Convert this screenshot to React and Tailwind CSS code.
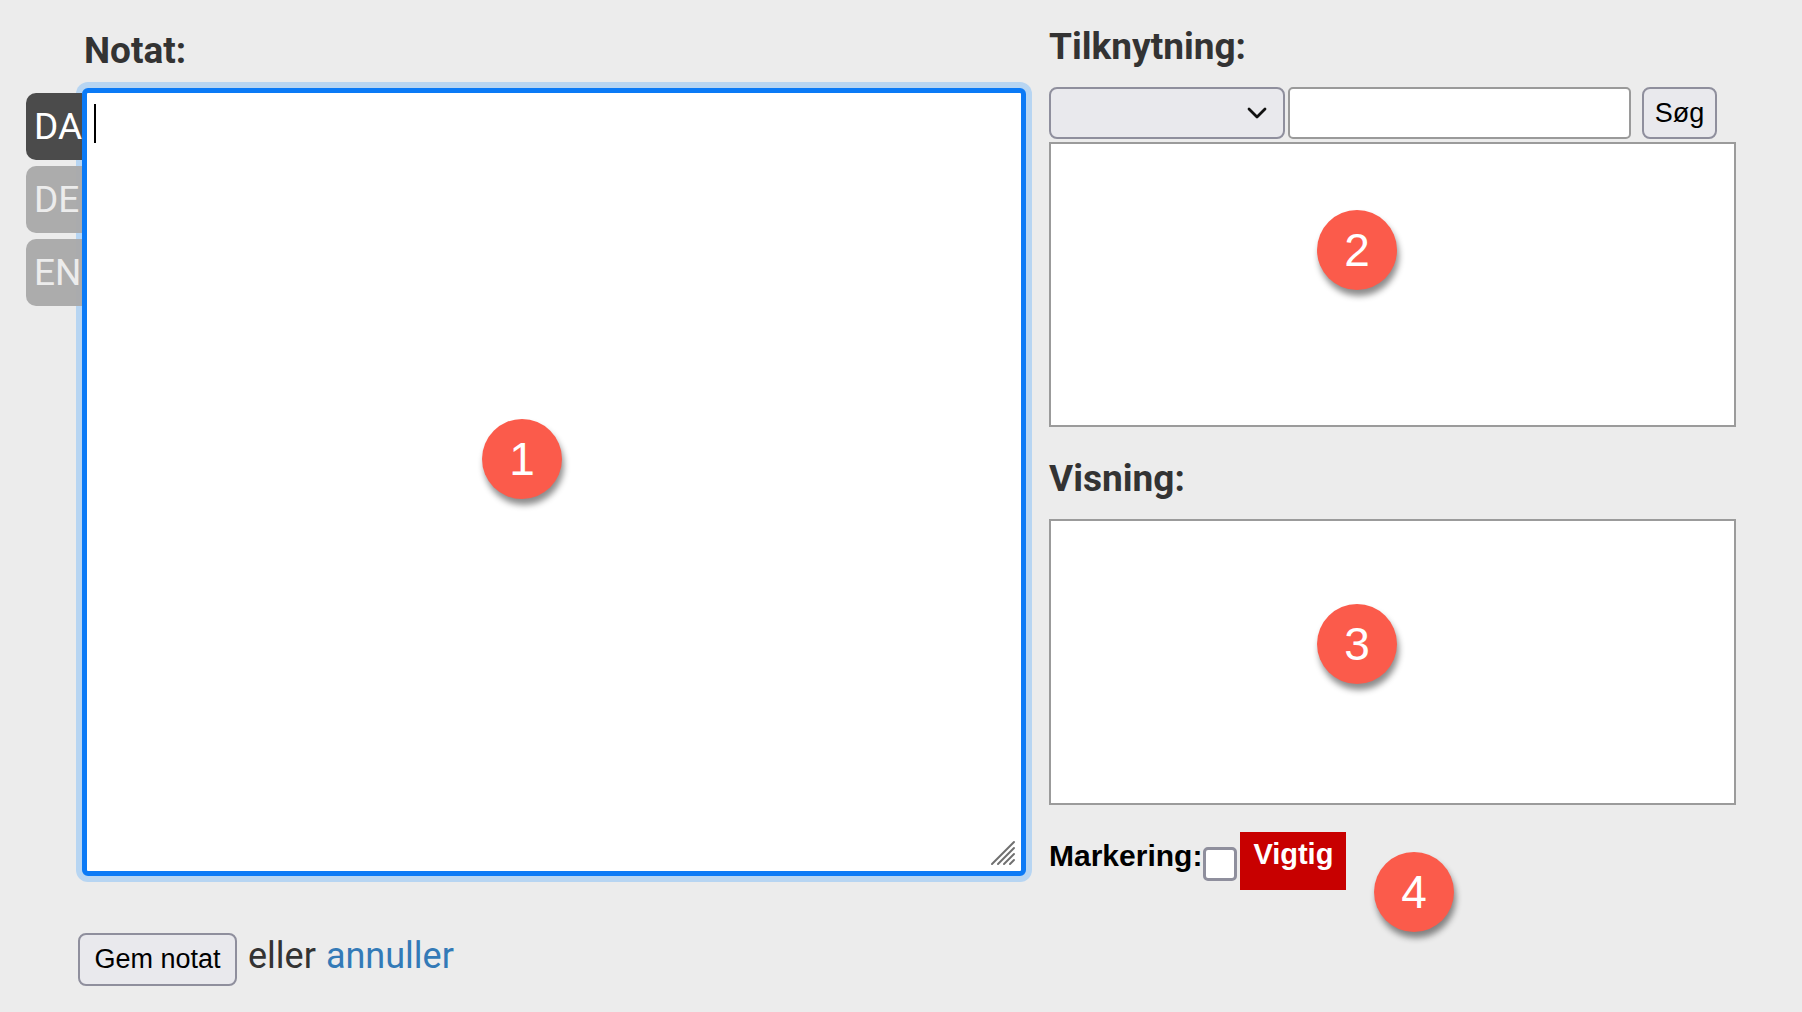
import React from "react";

const Badge = ({ n, className }) => (
  <div
    className={`absolute w-[80px] h-[80px] rounded-full bg-[#fb5b4b] shadow-[2px_6px_6px_rgba(0,0,0,0.45)] flex items-center justify-center text-white text-[46px] leading-none font-['Liberation_Sans',Arial,sans-serif] z-30 ${className}`}
  >
    {n}
  </div>
);

const Tab = ({ label, active }) => (
  <div
    className={`h-[67px] w-[56px] rounded-l-[10px] flex items-center pl-[8px] text-[37px] leading-none ${
      active ? "bg-[#4b4b4b] text-white" : "bg-[#a9a9a9]/95 text-[#ececec]"
    }`}
  >
    {label}
  </div>
);

export default function App() {
  return (
    <div className="relative w-[1802px] h-[1012px] overflow-hidden bg-[#ececec] font-['Roboto',sans-serif]">
      <div className="flex">
        {/* Left column: note */}
        <div className="pl-[26px] pt-[32px] w-[1026px] shrink-0">
          <h2 className="ml-[58px] text-[37px] leading-[37px] font-bold text-[#333]">Notat:</h2>
          <div className="flex mt-[19px]">
            <div className="relative z-20 flex flex-col gap-[6px] mt-[5px] w-[56px] shrink-0">
              <Tab label="DA" active />
              <Tab label="DE" />
              <Tab label="EN" />
            </div>
            <div className="relative z-10 w-[944px] h-[788px] bg-white border-[5px] border-[#0b7af6] rounded-[6px] shadow-[0_0_0_6px_#b7d5f2]">
              <div className="absolute left-[7px] top-[11px] w-[2px] h-[39px] bg-black" />
              <svg className="absolute right-[5px] bottom-[5px]" width="26" height="26" viewBox="0 0 26 26">
                <g stroke="#6f6f6f" strokeWidth="2" strokeLinecap="round">
                  <line x1="24" y1="2" x2="2" y2="24" />
                  <line x1="24" y1="8" x2="8" y2="24" />
                  <line x1="24" y1="14" x2="14" y2="24" />
                  <line x1="24" y1="20" x2="20" y2="24" />
                </g>
              </svg>
            </div>
          </div>
          <div className="flex items-baseline mt-[53px] ml-[52px]">
            <button className="w-[159px] h-[53px] rounded-[8px] border-2 border-[#8f8f9d] bg-[#e9e9ed] text-black text-[27px] font-['Liberation_Sans',Arial,sans-serif]">
              Gem notat
            </button>
            <span className="ml-[11px] text-[36px] text-[#333]">eller</span>
            <a className="ml-[10px] text-[36px] text-[#337ab7]">annuller</a>
          </div>
        </div>

        {/* Right column */}
        <div className="ml-[23px] pt-[28px] w-[687px]">
          <h2 className="text-[37px] leading-[37px] font-bold text-[#333]">Tilknytning:</h2>
          <div className="flex mt-[22px] h-[52px]">
            <div className="relative w-[236px] h-full rounded-[8px] border-2 border-[#8f8f9d] bg-[#e9e9ed]">
              <svg className="absolute right-[16px] top-[18px]" width="20" height="12" viewBox="0 0 20 12">
                <polyline points="2,2 10,10 18,2" fill="none" stroke="#111" strokeWidth="2.8" strokeLinecap="round" strokeLinejoin="round" />
              </svg>
            </div>
            <div className="ml-[3px] w-[343px] h-full rounded-[5px] border-2 border-[#9a9a9a] bg-white" />
            <button className="ml-[11px] w-[75px] h-full rounded-[8px] border-2 border-[#8f8f9d] bg-[#e9e9ed] text-black text-[27px] font-['Liberation_Sans',Arial,sans-serif]">
              Søg
            </button>
          </div>
          <div className="mt-[3px] w-[687px] h-[285px] border-2 border-[#9b9b9b] bg-white" />

          <h2 className="mt-[33px] text-[37px] leading-[37px] font-bold text-[#333]">Visning:</h2>
          <div className="mt-[22px] w-[687px] h-[286px] border-2 border-[#9b9b9b] bg-white" />

          <div className="flex items-start mt-[27px] font-['Liberation_Sans',Arial,sans-serif]">
            <span className="mt-[9px] text-[30px] leading-[30px] font-bold text-black">Markering:</span>
            <span className="mt-[15px] ml-[1px] w-[34px] h-[34px] rounded-[5px] border-[3px] border-[#8f8f9d] bg-white" />
            <span className="ml-[3px] h-[58px] px-[13px] pt-[7px] bg-[#c80000] text-white text-[29px] leading-[30px] font-bold">
              Vigtig
            </span>
          </div>
        </div>
      </div>

      <Badge n="1" className="left-[482px] top-[419px]" />
      <Badge n="2" className="left-[1317px] top-[210px]" />
      <Badge n="3" className="left-[1317px] top-[604px]" />
      <Badge n="4" className="left-[1374px] top-[852px]" />
    </div>
  );
}
